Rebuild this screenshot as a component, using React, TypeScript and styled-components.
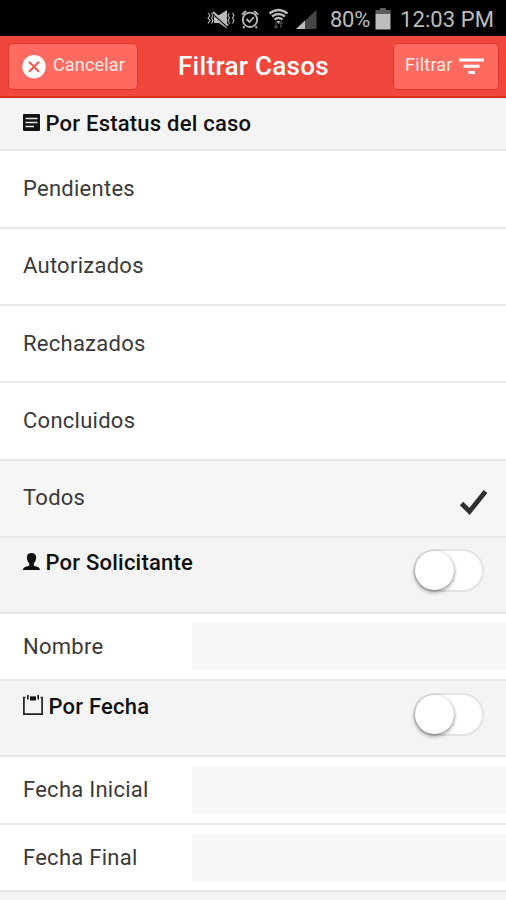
import React from 'react';
import styled, { createGlobalStyle } from 'styled-components';

const Global = createGlobalStyle`
  * { box-sizing: border-box; }
  body { margin: 0; background: #f4f4f4; font-family: Roboto, sans-serif; overflow: hidden; }
`;
const Screen = styled.main`
  width: 506px;
  height: 900px;
  overflow: hidden;
  display: flex;
  flex-direction: column;
  background: #f4f4f4;
  white-space: nowrap;
  & > * { flex-shrink: 0; }
`;
const StatusBar = styled.div`
  height: 36px;
  background: #000;
  color: #bcbcbc;
  display: flex;
  align-items: center;
  padding: 2px 0 0 206px;
  font-size: 22px;
`;
const StatusText = styled.span<{ $left: number; $width: number; $spacing: number }>`
  margin-left: ${p => p.$left}px;
  width: ${p => p.$width}px;
  letter-spacing: ${p => p.$spacing}px;
`;
const Header = styled.header`
  height: 62px;
  background: #f0473c;
  border-top: 1px solid #f8463b;
  border-bottom: 2px solid #e02f22;
  display: flex;
  align-items: flex-start;
  justify-content: space-between;
  padding: 6px 7px 0 8px;
`;
const HeaderButton = styled.button<{ $width: number; $inset: number; $gap: number; $spacing: number }>`
  width: ${p => p.$width}px;
  height: 47px;
  border: 1px solid #e3362b;
  border-radius: 5px;
  background: #ff6a60;
  color: #ffe9e6;
  font: 400 18px Roboto, sans-serif;
  letter-spacing: ${p => p.$spacing}px;
  display: flex;
  align-items: center;
  padding: 0 0 4px ${p => p.$inset}px;
  gap: ${p => p.$gap}px;
  svg { flex-shrink: 0; margin-top: 4px; }
`;
const Title = styled.h1`
  margin: 0 0 0 -24.5px;
  color: #fff;
  font-size: 26px;
  font-weight: 500;
  letter-spacing: 0.3px;
  line-height: 46px;
  width: 150.5px;
`;
const Section = styled.div<{ $height: number }>`
  height: ${p => p.$height}px;
  background: #f4f4f4;
  border-bottom: 2px solid #e8e8e8;
  display: flex;
  justify-content: space-between;
  padding: 10px 22px 0 23px;
`;
const SectionTitle = styled.h2<{ $gap: number; $height: number }>`
  margin: 0;
  height: ${p => p.$height}px;
  display: flex;
  align-items: center;
  gap: ${p => p.$gap}px;
  color: #111;
  font-size: 22px;
  font-weight: 500;
  letter-spacing: 0.22px;
`;
const Row = styled.div<{ $height: number; $selected?: boolean }>`
  height: ${p => p.$height}px;
  background: ${p => (p.$selected ? '#f6f6f6' : '#fff')};
  border-bottom: 2px solid #e8e8e8;
  display: flex;
  align-items: center;
  justify-content: space-between;
  padding-left: 23px;
`;
const RowLabel = styled.span<{ $lift?: number }>`
  color: #3a3a3a;
  font-size: 22px;
  line-height: 26px;
  letter-spacing: 0.26px;
  padding-bottom: ${p => p.$lift ?? 0}px;
`;
const Field = styled.input`
  width: 314px;
  height: 47px;
  border: 0;
  padding: 0;
  background: #f7f7f7;
  outline: 0;
`;
const Track = styled.div<{ $top: number }>`
  width: 71px;
  height: 43px;
  margin-top: ${p => p.$top}px;
  border: 2px solid #e3e3e3;
  border-radius: 22px;
  background: #fff;
`;
const Knob = styled.div`
  width: 39px;
  height: 39px;
  border-radius: 50%;
  background: #fff;
  box-shadow: 0 2px 4px rgba(0, 0, 0, 0.45), 0 0 2px rgba(0, 0, 0, 0.12);
`;
const CheckIcon = styled.svg`
  margin: 8px 18px 0 0;
`;

const StatusIcons = () => (
  <svg width="112" height="28" viewBox="206 4 112 28" fill="none" stroke="#b9b9b9">
    <path d="M208 12l2 2.500-2 2.500 2 2.500-2 3M211.500 12l1.500 2.500-1.500 2.500 1.500 2.500-1.500 3M229.500 12l-1.500 2.500 1.500 2.500-1.500 2.500 1.500 3M232.500 12l1.500 2.500-1.500 2.500 1.500 2.500-1.500 3" strokeWidth="1.100" />
    <path d="M214 14h5l8-5v18.500l-8-5.500h-5z" fill="#b9b9b9" stroke="none" />
    <path d="M213 13l15 13.500" stroke="#000" strokeWidth="1.300" />
    <path d="M213 11l15 13.500" strokeWidth="2.200" />
    <circle cx="250" cy="18.800" r="7.200" strokeWidth="1.800" />
    <path d="M246.500 18l3 3 4.500-5M242 13.500l4-3.500M258 13.500l-4-3.500M244.500 25.500l-1.500 1.500M255.500 25.500l1.500 1.500" strokeWidth="1.800" />
    <path d="M269.500 12.500q9-7 18 0M272 15.500q6.500-5 13 0M274.500 18.500q4-3 8 0" strokeWidth="2.300" />
    <path d="M276.500 20h4l-2 3z" fill="#b9b9b9" stroke="none" />
    <path d="M276 21v6m-2-2l2 2 2-2M281 27v-6m-2 2l2-2 2 2" stroke="#444" strokeWidth="1.500" />
    <path d="M296 28l20.500-19v19z" fill="#464646" stroke="none" />
    <path d="M296 28l9-8.500V28z" fill="#b9b9b9" stroke="none" />
  </svg>
);
const Battery = () => (
  <svg width="16" height="22" viewBox="0 0 16 22">
    <path d="M5 0h6v2h4.500v4H.5V2H5z" fill="#5c5c5c" />
    <path d="M.5 6h15v15.500H.5z" fill="#bdbdbd" />
  </svg>
);
const CloseIcon = () => (
  <svg width="24" height="24" viewBox="0 0 24 24">
    <circle cx="12" cy="11.700" r="11.700" fill="#fff" />
    <path d="M7 6.700l10 10M17 6.700l-10 10" stroke="#f0584e" strokeWidth="2" />
  </svg>
);
const FilterIcon = () => (
  <svg width="25" height="18" viewBox="0 0 25 18" fill="#fff">
    <path d="M0 .5h25v3H0zM4.500 6.800h16v3h-16zM9.500 13h6.500v3H9.500z" />
  </svg>
);
const ArticleIcon = () => (
  <svg width="17" height="19" viewBox="0 0 17 19">
    <path d="M1 0h15a1 1 0 011 1v15a1 1 0 01-1 1H1a1 1 0 01-1-1V1a1 1 0 011-1z" fill="#111" />
    <path d="M2.500 4.500h12M2.500 8.500h12M2.500 12.500h8.500" stroke="#e8e8e8" strokeWidth="1.500" />
  </svg>
);
const PersonIcon = () => (
  <svg width="17" height="19" viewBox="0 0 17 19">
    <path d="M8.500 0C5.300 0 3.700 1.800 3.900 4.800c.1 2.600 1 4.400 2.300 5.400v2.400C4.500 13.800.2 13.500 0 17h17c-.2-3.500-4.500-3.200-6.200-4.400v-2.400c1.300-1 2.200-2.800 2.300-5.400C13.300 1.800 11.700 0 8.500 0z" fill="#111" />
  </svg>
);
const CalendarIcon = () => (
  <svg width="20" height="22" viewBox="0 0 20 22">
    <path d="M.9 2.500h18.200v16.600H.9z" fill="none" stroke="#222" strokeWidth="1.700" />
    <path d="M2.500 0h4.500v5H2.500zM13 0h4.500v5H13z" fill="#f4f4f4" />
    <path d="M4 0h1.600v4.500H4zM14.400 0h1.600v4.500h-1.600zM7 1.600h6V5.500H7z" fill="#111" />
  </svg>
);
const Toggle = ({ top }: { top: number }) => (
  <Track role="switch" aria-checked="false" $top={top}><Knob /></Track>
);

const statuses = [
  { name: 'Pendientes', height: 78, lift: 0 },
  { name: 'Autorizados', height: 77, lift: 1 },
  { name: 'Rechazados', height: 77, lift: 0 },
  { name: 'Concluidos', height: 78, lift: 1 },
  { name: 'Todos', height: 77, lift: 1 },
];

export default function App() {
  return (
    <Screen>
      <Global />
      <StatusBar>
        <StatusIcons />
        <StatusText $left={12} $width={45} $spacing={-0.3}>80%</StatusText>
        <Battery />
        <StatusText $left={9} $width={96} $spacing={0.1}>12:03 PM</StatusText>
      </StatusBar>
      <Header>
        <HeaderButton $width={130} $inset={13} $gap={7} $spacing={0.15}><CloseIcon />Cancelar</HeaderButton>
        <Title>Filtrar Casos</Title>
        <HeaderButton $width={106} $inset={11} $gap={6.5} $spacing={0.2}>Filtrar<FilterIcon /></HeaderButton>
      </Header>
      <Section $height={53}>
        <SectionTitle $gap={5.5} $height={30}><ArticleIcon />Por Estatus del caso</SectionTitle>
      </Section>
      {statuses.map(s => (
        <Row key={s.name} $height={s.height} $selected={s.name === 'Todos'}>
          <RowLabel $lift={s.lift}>{s.name}</RowLabel>
          {s.name === 'Todos' && (
            <CheckIcon width="29" height="27" viewBox="0 0 29 27">
              <path d="M2.500 14.500l8 8L26.500 2.500" fill="none" stroke="#303030" strokeWidth="4.800" />
            </CheckIcon>
          )}
        </Row>
      ))}
      <Section $height={76}>
        <SectionTitle $gap={5.5} $height={29}><PersonIcon />Por Solicitante</SectionTitle>
        <Toggle top={1} />
      </Section>
      <Row $height={67}><RowLabel>Nombre</RowLabel><Field aria-label="Nombre" /></Row>
      <Section $height={76}>
        <SectionTitle $gap={5.5} $height={30}><CalendarIcon />Por Fecha</SectionTitle>
        <Toggle top={2} />
      </Section>
      <Row $height={68}><RowLabel>Fecha Inicial</RowLabel><Field aria-label="Fecha Inicial" /></Row>
      <Row $height={67}><RowLabel>Fecha Final</RowLabel><Field aria-label="Fecha Final" /></Row>
    </Screen>
  );
}
